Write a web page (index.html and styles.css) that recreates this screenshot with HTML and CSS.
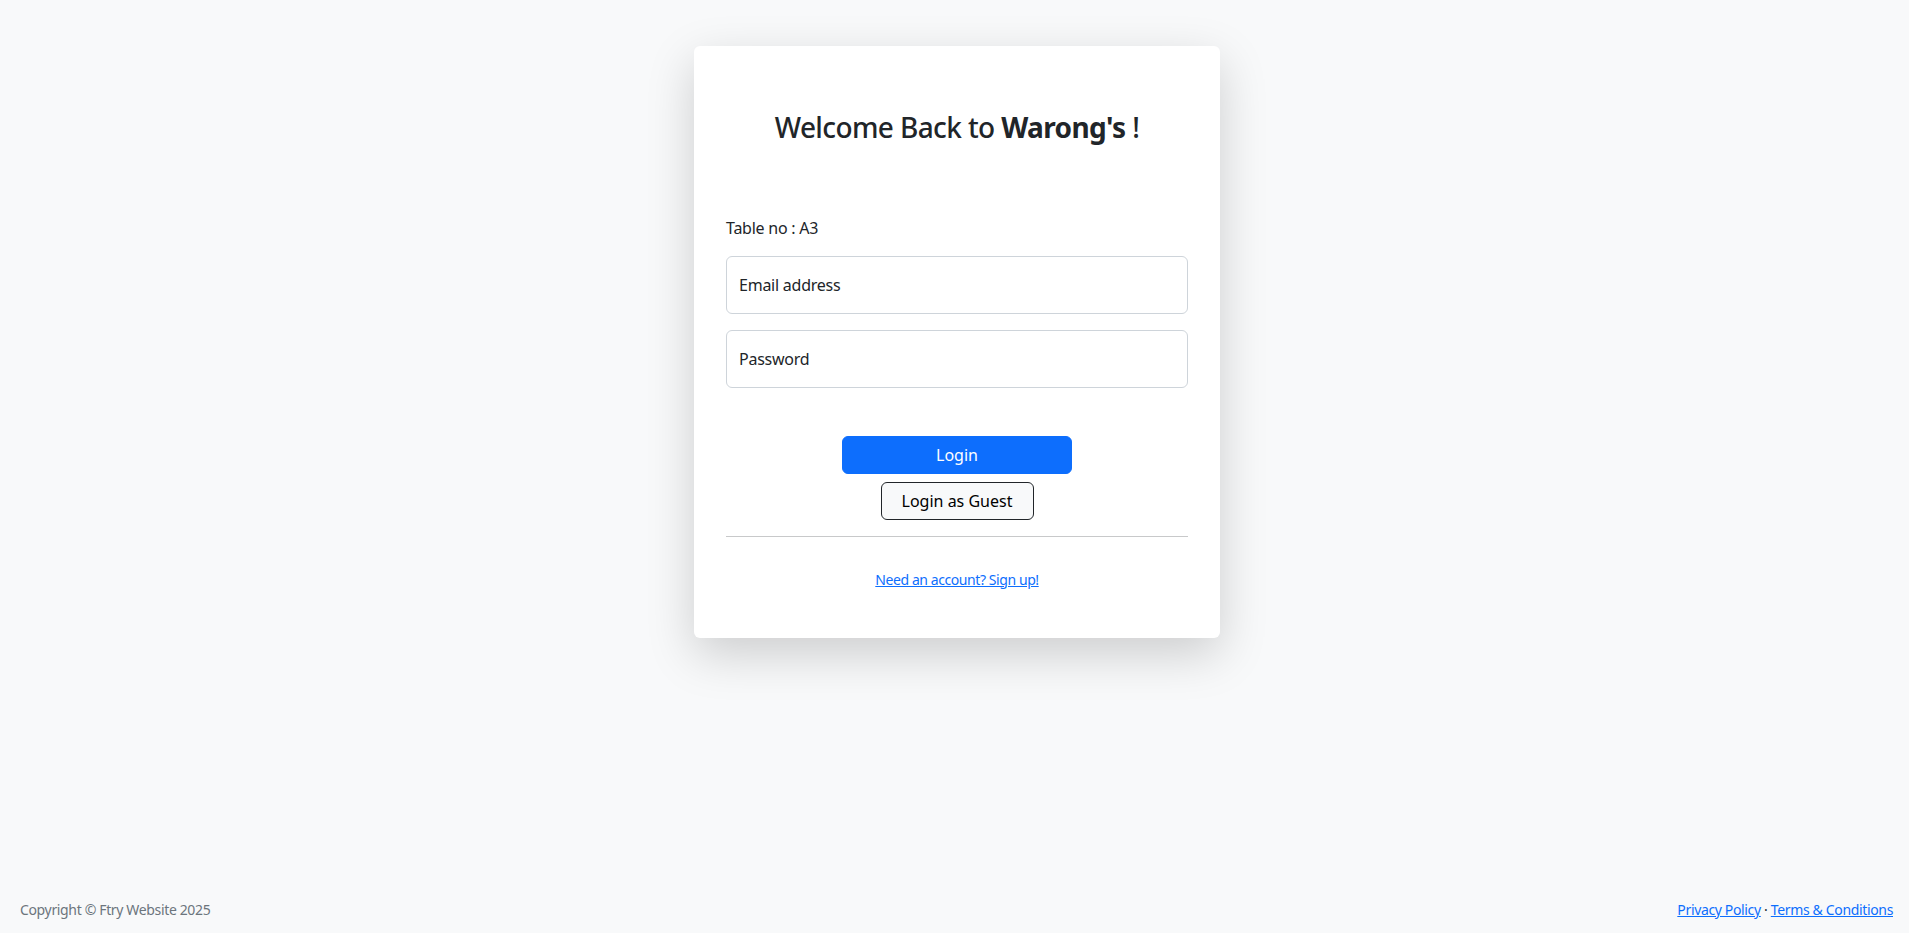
FILE: index.html
```html
<!DOCTYPE html>
<html lang="en">
<head>
<meta charset="utf-8">
<title>Login - Warong's</title>
<link rel="stylesheet" href="styles.css">
</head>
<body>
<main class="main">
  <div class="card">
    <div class="card-header">
      <h3 class="title">Welcome Back to <strong>Warong's</strong> !</h3>
    </div>
    <div class="card-body">
      <p class="table-no">Table no : A3</p>
      <div class="field">
        <input class="input" type="email" id="email" placeholder=" ">
        <label class="field-label" for="email">Email address</label>
      </div>
      <div class="field">
        <input class="input" type="password" id="password" placeholder=" ">
        <label class="field-label" for="password">Password</label>
      </div>
      <div class="actions">
        <button class="btn btn-primary" type="button">Login</button>
        <button class="btn btn-guest" type="button">Login as Guest</button>
      </div>
      <hr class="divider">
    </div>
    <div class="card-footer">
      <a class="link" href="#">Need an account? Sign up!</a>
    </div>
  </div>
</main>
<footer class="footer">
  <div class="copyright">Copyright &copy; Ftry Website 2025</div>
  <div class="legal">
    <a class="link" href="#">Privacy Policy</a>
    <span class="dot">&middot;</span>
    <a class="link" href="#">Terms &amp; Conditions</a>
  </div>
</footer>
</body>
</html>
```

FILE: styles.css
```css
* { box-sizing: border-box; }

html, body { height: 100%; }

body {
  margin: 0;
  background: #f8f9fa;
  color: #212529;
  font-family: "Segoe UI", "Noto Sans", "Open Sans", sans-serif;
  font-size: 16px;
  line-height: 1.5;
  letter-spacing: -0.015em;
  display: flex;
  flex-direction: column;
  min-height: 100vh;
}

.main {
  flex: 1;
  padding-left: 5px;
}

.card {
  width: 526px;
  margin: 46px auto 0;
  background: #fff;
  border-radius: 6px;
  box-shadow: 0 16px 48px rgba(0, 0, 0, 0.175);
}

.card-header {
  padding: 65px 32px 0;
}

.title {
  margin: 0;
  font-size: 28px;
  font-weight: 500;
  line-height: 1.2;
  letter-spacing: -0.022em;
  text-align: center;
}

.title strong { font-weight: 700; }

.card-body {
  padding: 71px 32px 0;
}

.table-no {
  margin: 0 0 16px;
  font-size: 16px;
  line-height: 24px;
}

.field {
  position: relative;
  margin-bottom: 16px;
}

.input {
  display: block;
  width: 100%;
  height: 58px;
  border: 1px solid #ced4da;
  border-radius: 6px;
  background: #fff;
  font: inherit;
  padding: 0 12px;
}

.field-label {
  position: absolute;
  left: 13px;
  top: 0;
  height: 58px;
  display: flex;
  align-items: center;
  color: #212529;
  pointer-events: none;
}

.actions {
  display: flex;
  flex-direction: column;
  align-items: center;
  gap: 8px;
  margin-top: 48px;
}

.btn {
  height: 38px;
  font: inherit;
  font-size: 16px;
  border-radius: 6px;
  cursor: pointer;
}

.btn-primary {
  width: 230px;
  background: #0d6efd;
  border: 1px solid #0d6efd;
  color: #fff;
}

.btn-guest {
  width: 153px;
  background: #f8f9fa;
  border: 1px solid #212529;
  color: #000;
}

.divider {
  margin: 16px 0 0;
  border: 0;
  border-top: 1px solid #c8c9ca;
}

.card-footer {
  padding: 32px 32px 48px;
  text-align: center;
  font-size: 14px;
  line-height: 21px;
  letter-spacing: -0.03em;
}

.link {
  color: #0d6efd;
  text-decoration: underline;
}

.footer {
  display: flex;
  justify-content: space-between;
  align-items: center;
  padding: 0 16px 13px 20px;
  font-size: 14px;
  line-height: 21px;
  letter-spacing: -0.025em;
}

.copyright { color: #6c757d; }

.dot { color: #212529; }
```
